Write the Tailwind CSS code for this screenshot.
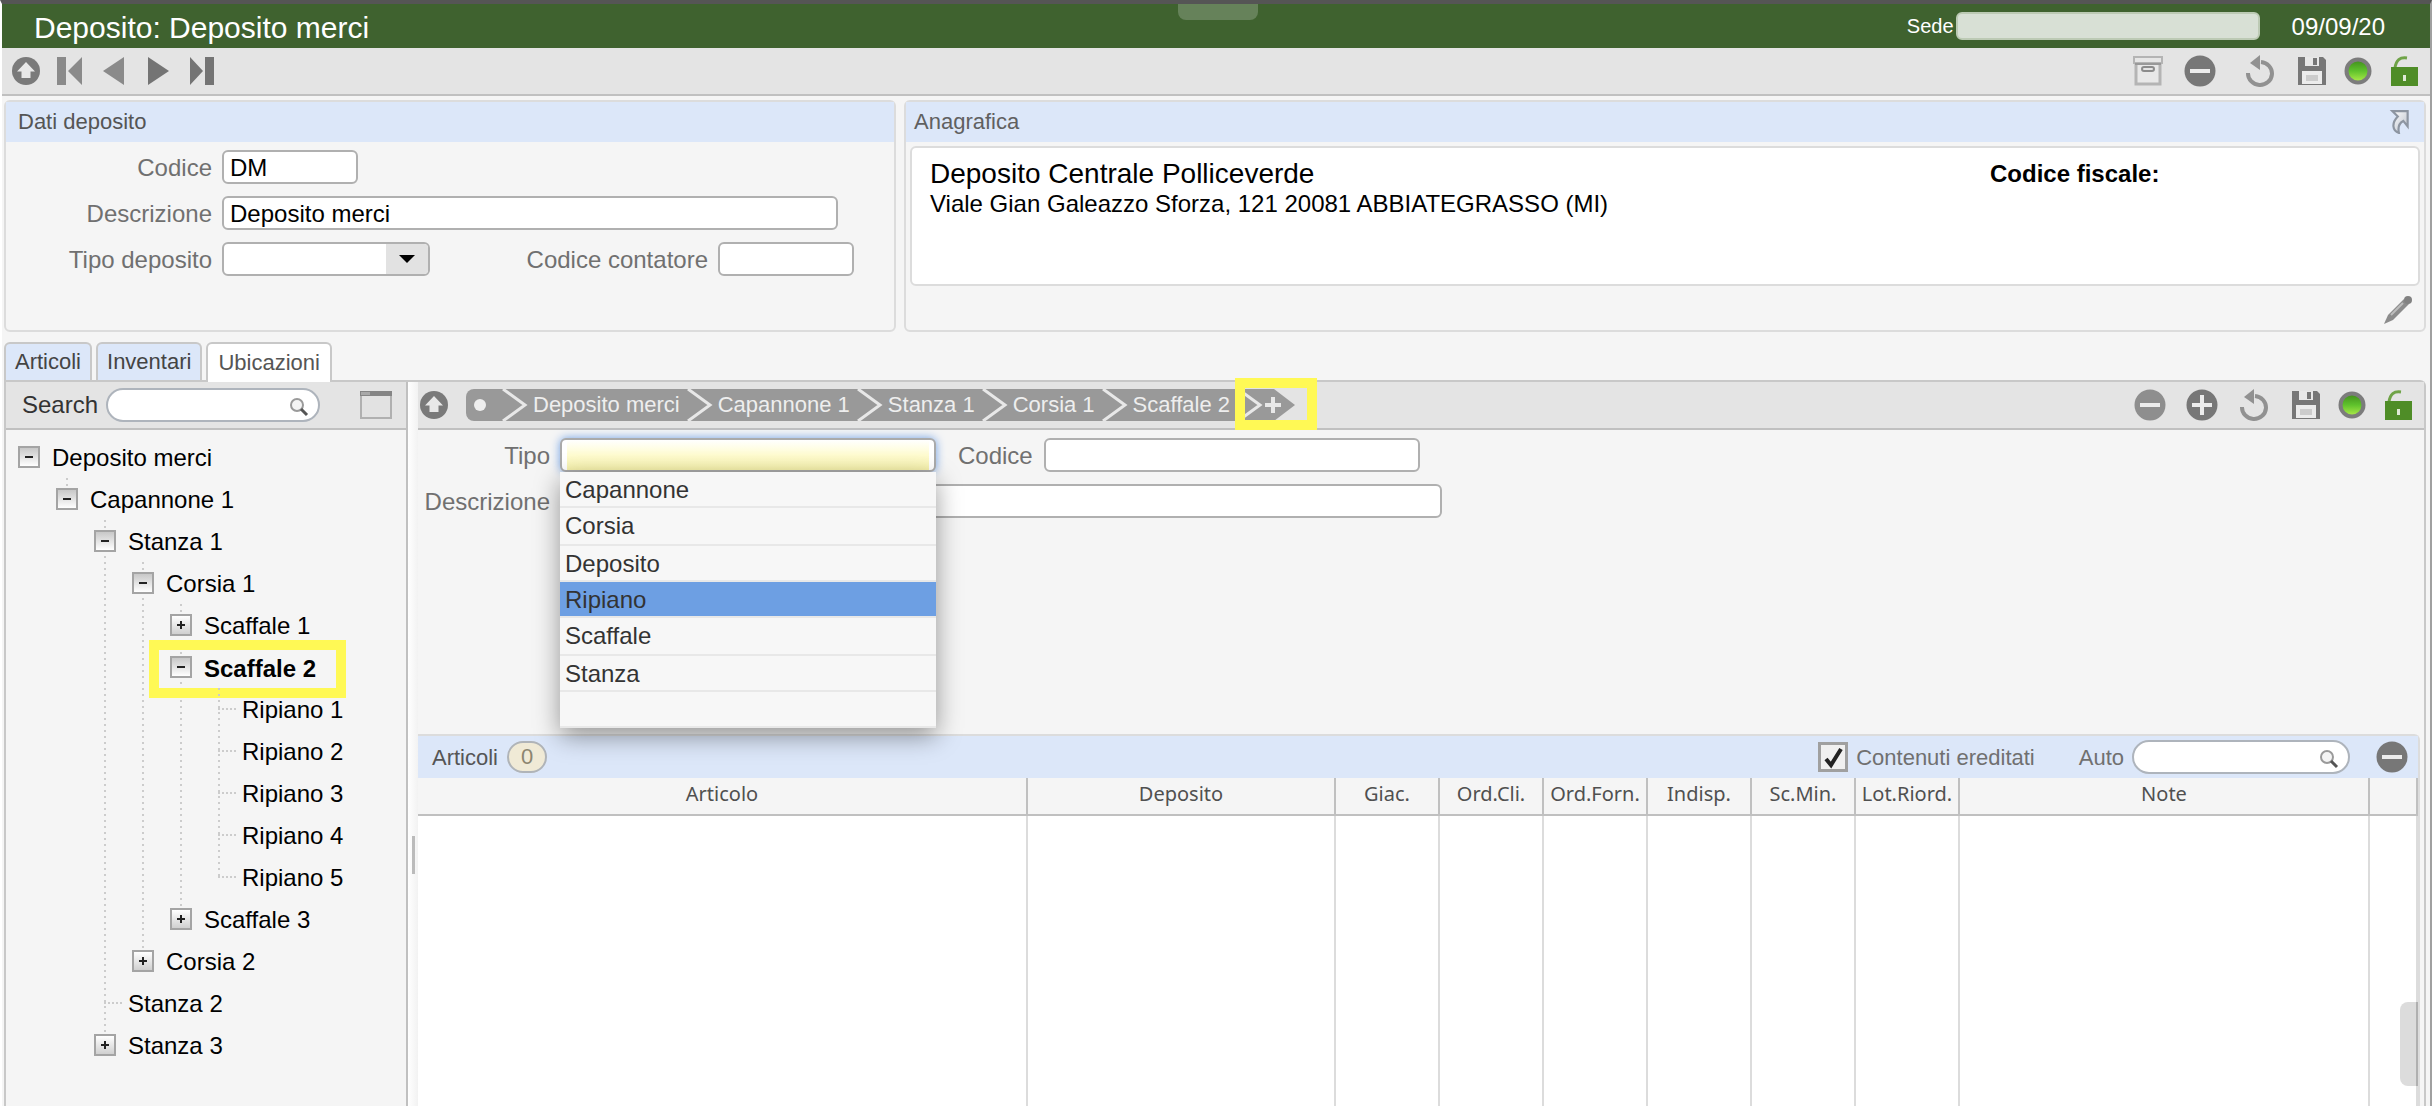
<!DOCTYPE html>
<html lang="it">
  <head>
    <meta charset="UTF-8" />
    <meta name="viewport" content="width=device-width, initial-scale=1.0" />
    <title>Deposito: Deposito merci</title>
    <script src="https://cdn.jsdelivr.net/npm/@tailwindcss/browser@4"></script>
  </head>
  <body class="bg-[#f5f5f5] text-black text-2xl leading-7 font-['Liberation_Sans',Arial,sans-serif]">
    <!-- icons -->
    <svg class="absolute size-0">
      <defs>
        <linearGradient id="led-fill" x1="0" y1="0" x2="0" y2="1">
          <stop offset="0" stop-color="#3f8a1c" />
          <stop offset="0.5" stop-color="#5fc22c" />
          <stop offset="1" stop-color="#b4ee4c" />
        </linearGradient>
        <linearGradient id="arrow-fill" x1="0" y1="0" x2="1" y2="1">
          <stop offset="0" stop-color="#ffffff" />
          <stop offset="1" stop-color="#b8bec8" />
        </linearGradient>
      </defs>
      <symbol id="up" viewBox="0 0 28 28">
        <circle cx="14" cy="14" r="14" fill="#7a7a7a" />
        <path d="M14 5l9 9.5h-4.500V21h-9v-6.500H5z" fill="#e8e8e8" />
      </symbol>
      <symbol id="first" viewBox="0 0 28 28"><path d="M1 0h9v28H1zM26 0v28L12 14z" fill="#8a8a8a" /></symbol>
      <symbol id="prev" viewBox="0 0 28 28"><path d="M24 0v28L3 14z" fill="#8a8a8a" /></symbol>
      <symbol id="next" viewBox="0 0 28 28"><path d="M4 0v28l21-14z" fill="#747474" /></symbol>
      <symbol id="last" viewBox="0 0 28 28"><path d="M2 0v28l13-14zM17 0h9v28h-9z" fill="#747474" /></symbol>
      <symbol id="archive" viewBox="0 0 32 32">
        <g fill="none" stroke="#b4b4b4" stroke-width="2">
          <path d="M2 2h28v6H2z" fill="#e6e6e6" />
          <path d="M4 9v20h24V9" stroke-width="3" fill="#e8e8e8" />
        </g>
        <path d="M3 9h26" stroke="#999" stroke-width="2" />
        <rect x="10" y="12" width="12" height="4" rx="2" fill="#e4e4e4" stroke="#8c8c8c" stroke-width="2" />
      </symbol>
      <symbol id="minus" viewBox="0 0 32 32">
        <circle cx="16" cy="16" r="15.500" fill="currentColor" />
        <path d="M6 14h20v4H6z" fill="#ececec" />
      </symbol>
      <symbol id="plus" viewBox="0 0 32 32">
        <circle cx="16" cy="16" r="15.500" fill="currentColor" />
        <path d="M6 14h8V6h4v8h8v4h-8v8h-4v-8H6z" fill="#ececec" />
      </symbol>
      <symbol id="undo" viewBox="0 0 32 32">
        <path d="M4 18a12 11.500 0 1 0 13-11" fill="none" stroke="#919191" stroke-width="4" />
        <path d="M6 8l10-8v15z" fill="#919191" />
      </symbol>
      <symbol id="save" viewBox="0 0 32 32">
        <path d="M2 2h25l3 3v25H2z" fill="#777" />
        <path d="M9 2h14v9H9z" fill="#e8e8e8" />
        <path d="M17 3h4v7h-4z" fill="#777" />
        <path d="M6 16h20v13H6z" fill="#ececec" />
        <path d="M10 20h12v6H10z" fill="#ccc" />
      </symbol>
      <symbol id="led" viewBox="0 0 32 32">
        <circle cx="16" cy="16" r="11.500" fill="url(#led-fill)" stroke="#7c7c7c" stroke-width="4" />
      </symbol>
      <symbol id="unlock" viewBox="0 0 32 32">
        <path d="M7 13C8 5 12 2 19 3" fill="none" stroke="#6fa347" stroke-width="3" />
        <path d="M3 12h27v19H3z" fill="#4f8d27" />
        <path d="M15 20h3v6h-3z" fill="#dfe9d5" />
      </symbol>
      <symbol id="search" viewBox="0 0 20 20">
        <circle cx="8" cy="8" r="6" fill="#f4f4f4" stroke="#9a9a9a" stroke-width="2" />
        <path d="M12 12l6 6" stroke="#555" stroke-width="3" />
      </symbol>
      <symbol id="chevron" viewBox="0 0 26 32">
        <path d="M1 0l22 16L1 32" fill="none" stroke="#e8e8e8" stroke-width="3" />
      </symbol>
    </svg>

    <div class="min-h-screen flex flex-col border-t-4 border-t-[#555] border-l-2 border-l-white border-r-2 border-r-[#a0a0a0]">
      <!-- title bar -->
      <header class="relative h-11 shrink-0 flex items-center bg-[#3f622f] text-white">
        <h1 class="pt-1 pl-8 text-[30px]">Deposito: Deposito merci</h1>
        <div class="absolute top-0 left-[1176px] w-20 h-4 rounded-b-lg bg-[#66825a]"></div>
        <label for="sede" class="ml-auto mr-[2px] text-xl">Sede</label>
        <input id="sede" type="text" class="w-[304px] h-7 rounded-md border-2 border-[#bccab4] bg-[#d8e0d5]" />
        <time class="pt-[2px] ml-8 mr-[45px]">09/09/20</time>
      </header>

      <div class="h-12 shrink-0 flex items-center justify-between bg-[#e4e4e4] border-b-2 border-[#c0c0c0] px-[10px]">
        <div class="flex gap-4">
          <button aria-label="Su"><svg class="size-7"><use href="#up" /></svg></button>
          <button aria-label="Primo"><svg class="size-7"><use href="#first" /></svg></button>
          <button aria-label="Precedente"><svg class="size-7"><use href="#prev" /></svg></button>
          <button aria-label="Successivo"><svg class="size-7"><use href="#next" /></svg></button>
          <button aria-label="Ultimo"><svg class="size-7"><use href="#last" /></svg></button>
        </div>
        <div class="flex text-[#777]">
          <button aria-label="Archivia" class="mr-5"><svg class="size-8"><use href="#archive" /></svg></button>
          <button aria-label="Elimina" class="mr-7"><svg class="size-8"><use href="#minus" /></svg></button>
          <button aria-label="Annulla" class="mr-5"><svg class="size-8"><use href="#undo" /></svg></button>
          <button aria-label="Salva" class="mr-[14px]"><svg class="size-8"><use href="#save" /></svg></button>
          <button aria-label="Stato" class="mr-[14px]"><svg class="size-8"><use href="#led" /></svg></button>
          <button aria-label="Sblocca"><svg class="size-8"><use href="#unlock" /></svg></button>
        </div>
      </div>

      <div class="flex gap-2 pt-1 pl-[2px] pr-1">
        <!-- dati deposito -->
        <section class="w-[892px] h-[232px] shrink-0 border-2 border-[#dcdcdc] rounded-md">
          <h2 class="h-10 flex items-center px-3 bg-[#dce7f9] text-[22px] text-[#555]">Dati deposito</h2>
          <form class="flex flex-col gap-3 pt-2 text-[#707070]">
            <div class="flex items-center gap-[10px]">
              <label for="codice" class="w-[206px] pt-[2px] text-right">Codice</label>
              <input id="codice" type="text" value="DM" class="w-[136px] h-[34px] pt-[2px] px-[6px] bg-white text-black border-2 border-[#b0b0b0] rounded-md" />
            </div>
            <div class="flex items-center gap-[10px]">
              <label for="descrizione" class="w-[206px] pt-[2px] text-right">Descrizione</label>
              <input id="descrizione" type="text" value="Deposito merci" class="w-[616px] h-[34px] pt-[2px] px-[6px] bg-white text-black border-2 border-[#b0b0b0] rounded-md" />
            </div>
            <div class="flex items-center gap-[10px]">
              <label for="tipo-deposito" class="w-[206px] pt-[2px] text-right">Tipo deposito</label>
              <div class="relative">
                <select id="tipo-deposito" class="block w-[208px] h-[34px] appearance-none bg-white border-2 border-[#b0b0b0] rounded-md">
                  <option></option>
                </select>
                <span class="absolute right-[2px] top-[2px] w-[42px] h-[30px] flex items-center justify-center bg-[#e2e2e2] rounded-r-sm pointer-events-none">
                  <svg class="w-4 h-2" viewBox="0 0 16 8"><path d="M0 0h16L8 8z" /></svg>
                </span>
              </div>
              <label for="contatore" class="w-[268px] pt-[2px] text-right">Codice contatore</label>
              <input id="contatore" type="text" class="w-[136px] h-[34px] px-[6px] bg-white text-black border-2 border-[#b0b0b0] rounded-md" />
            </div>
          </form>
        </section>

        <!-- anagrafica -->
        <section class="flex-1 h-[232px] flex flex-col border-2 border-[#dcdcdc] rounded-md">
          <div class="h-10 shrink-0 flex items-center justify-between pl-2 pr-3 bg-[#dce7f9]">
            <h2 class="text-[22px] text-[#606060]">Anagrafica</h2>
            <button aria-label="Apri anagrafica">
              <svg class="size-6" viewBox="0 0 20 22"><path d="M3 1h14v14l-4-5c-4 2-5 6-4 11C3 19 2 12 8 6z" fill="url(#arrow-fill)" stroke="#8d95a1" stroke-width="2" /></svg>
            </button>
          </div>
          <div class="h-[140px] flex mt-1 mx-1 pt-[10px] pl-[18px] bg-white border-2 border-[#dcdcdc] rounded-md">
            <div class="flex-1">
              <p class="text-[28px] leading-8">Deposito Centrale Polliceverde</p>
              <p>Viale Gian Galeazzo Sforza, 121 20081 ABBIATEGRASSO (MI)</p>
            </div>
            <p class="w-[428px] leading-8 font-bold">Codice fiscale:</p>
          </div>
          <button aria-label="Modifica" class="ml-auto mr-3 mt-[10px]">
            <svg class="size-7" viewBox="0 0 28 28">
              <path d="M0 28l4-9L20 3l5 5L9 24z" fill="#8c8c8c" />
              <path d="M7 19L19 7" stroke="#bdbdbd" stroke-width="2" />
              <circle cx="24" cy="4" r="4" fill="#828282" />
            </svg>
          </button>
        </section>
      </div>

      <!-- tabs -->
      <nav class="relative z-10 flex gap-1 pt-[10px] pl-[2px] text-[22px] text-[#444]">
        <button class="h-[38px] px-[9px] bg-[#dce7f9] border-2 border-b-0 border-[#c8c8c8] rounded-t-md">Articoli</button>
        <button class="h-[38px] px-[9px] bg-[#dce7f9] border-2 border-b-0 border-[#c8c8c8] rounded-t-md">Inventari</button>
        <button class="h-10 -mb-[2px] px-[10px] bg-white border-2 border-b-0 border-[#c8c8c8] rounded-t-md text-[#555]">Ubicazioni</button>
      </nav>

      <main class="flex-1 flex ml-[2px] mr-1 border-2 border-b-0 border-[#c8c8c8] rounded-tr-md">
        <!-- albero ubicazioni -->
        <aside class="w-[402px] shrink-0 border-r-2 border-[#c0c0c0]">
          <div class="h-12 flex items-center pl-4 pr-[14px] bg-[#e4e4e4] border-b-2 border-[#c0c0c0]">
            <label for="cerca" class="text-[#333]">Search</label>
            <div class="relative ml-2">
              <input id="cerca" type="text" class="block w-[214px] h-[34px] pl-4 pr-10 bg-white border-2 border-[#aeb4bc] rounded-full" />
              <svg class="absolute right-[11px] top-[9px] size-5"><use href="#search" /></svg>
            </div>
            <button aria-label="Finestra" class="ml-auto">
              <svg class="w-8 h-7" viewBox="0 0 32 28">
                <path d="M1 1h30v26H1z" fill="#e2e2e2" stroke="#b0b0b0" stroke-width="2" />
                <path d="M0 0h32v5H0z" fill="#858585" />
                <path d="M1 1h9v3H1z" fill="#a8a8a8" />
              </svg>
            </button>
          </div>
          <div id="tree" class="pt-[6px] pl-1"></div>
        </aside>

        <div class="w-[10px] shrink-0 bg-linear-to-r from-white to-[#f2f2f2]">
          <span class="block ml-1 mt-[454px] w-[3px] h-[38px] bg-[#bbb]"></span>
        </div>

        <div class="flex-1 flex flex-col">
          <div class="h-12 shrink-0 flex items-center justify-between pl-[2px] pr-[10px] bg-[#e4e4e4] border-b-2 border-[#c0c0c0]">
            <div class="flex items-center">
              <button aria-label="Su" class="mr-[18px]"><svg class="size-7"><use href="#up" /></svg></button>
              <nav class="relative h-8 flex items-center text-[22px] text-[#eee]">
                <a href="#" aria-label="Radice" class="h-8 w-9 flex items-center pl-2 bg-[#999] rounded-l-lg"><span class="size-3 rounded-full bg-[#eee]"></span></a>
                <svg class="w-[26px] h-8 bg-[#999]"><use href="#chevron" /></svg>
                <a href="#" class="h-8 pl-[5px] pr-[7px] bg-[#999] leading-8">Deposito merci</a>
                <svg class="w-[26px] h-8 bg-[#999]"><use href="#chevron" /></svg>
                <a href="#" class="h-8 pl-[5px] pr-[7px] bg-[#999] leading-8">Capannone 1</a>
                <svg class="w-[26px] h-8 bg-[#999]"><use href="#chevron" /></svg>
                <a href="#" class="h-8 pl-[5px] pr-[7px] bg-[#999] leading-8">Stanza 1</a>
                <svg class="w-[26px] h-8 bg-[#999]"><use href="#chevron" /></svg>
                <a href="#" class="h-8 pl-[5px] pr-[7px] bg-[#999] leading-8">Corsia 1</a>
                <svg class="w-[26px] h-8 bg-[#999]"><use href="#chevron" /></svg>
                <a href="#" class="h-8 pl-[5px] pr-[7px] bg-[#999] leading-8">Scaffale 2</a>
                <svg class="w-[26px] h-8 bg-[#999]"><use href="#chevron" /></svg>
                <button aria-label="Aggiungi">
                  <svg class="w-8 h-8" viewBox="0 0 32 32">
                    <path d="M0 0h11l21 16-21 16H0z" fill="#999" />
                    <path d="M2 14h6V8h4v6h6v4h-6v6H8v-6H2z" fill="#e8e8e8" />
                  </svg>
                </button>
                <span class="absolute -right-[22px] -top-[11px] w-[82px] h-[52px] border-10 border-[#fff955]"></span>
              </nav>
            </div>
            <div class="flex text-[#777]">
              <button aria-label="Elimina" class="mr-5 text-[#8e8e8e]"><svg class="size-8"><use href="#minus" /></svg></button>
              <button aria-label="Aggiungi" class="mr-5"><svg class="size-8"><use href="#plus" /></svg></button>
              <button aria-label="Annulla" class="mr-5"><svg class="size-8"><use href="#undo" /></svg></button>
              <button aria-label="Salva" class="mr-[14px]"><svg class="size-8"><use href="#save" /></svg></button>
              <button aria-label="Stato" class="mr-[14px]"><svg class="size-8"><use href="#led" /></svg></button>
              <button aria-label="Sblocca"><svg class="size-8"><use href="#unlock" /></svg></button>
            </div>
          </div>

          <form class="h-[304px] shrink-0 flex flex-col gap-3 pt-2 text-[#707070]">
            <div class="flex items-center">
              <label for="tipo" class="w-[132px] mr-[10px] pt-[2px] text-right">Tipo</label>
              <div class="relative z-20">
                <div class="w-[376px] h-[34px] px-[5px] bg-white border-2 border-[#aaa] rounded-md shadow-[0_0_10px_#6f9fe4]">
                  <input id="tipo" type="text" class="block w-full h-[30px] bg-linear-to-b from-white via-[#fffcd0] to-[#f8f3ac] outline-none" />
                </div>
                <ul class="absolute left-0 top-[34px] w-[376px] bg-[#f7f7f7] text-[#333] shadow-[0_8px_24px_rgba(0,0,0,0.4)]">
                  <li class="h-9 px-[5px] leading-9 border-b-2 border-[#e8e8e8]">Capannone</li>
                  <li class="h-[38px] px-[5px] leading-9 border-b-2 border-[#e8e8e8]">Corsia</li>
                  <li class="h-9 px-[5px] leading-9 border-b-2 border-[#e8e8e8]">Deposito</li>
                  <li class="h-9 px-[5px] leading-9 border-b-2 border-[#e8e8e8] bg-[#6d9fe3]">Ripiano</li>
                  <li class="h-[38px] px-[5px] leading-9 border-b-2 border-[#e8e8e8]">Scaffale</li>
                  <li class="h-9 px-[5px] leading-9 border-b-2 border-[#e8e8e8]">Stanza</li>
                  <li class="h-9 border-b-2 border-[#e8e8e8]"></li>
                </ul>
              </div>
              <label for="codice-ubi" class="ml-[22px] mr-[11px] pt-[2px]">Codice</label>
              <input id="codice-ubi" type="text" class="w-[376px] h-[34px] px-[6px] bg-white border-2 border-[#b0b0b0] rounded-md" />
            </div>
            <div class="flex items-center">
              <label for="descr-ubi" class="w-[132px] mr-[10px] pt-[2px] text-right">Descrizione</label>
              <input id="descr-ubi" type="text" class="w-[882px] h-[34px] px-[6px] bg-white border-2 border-[#b0b0b0] rounded-md" />
            </div>
          </form>

          <!-- articoli -->
          <section class="relative flex-1 flex flex-col mr-1 bg-white border-t-2 border-r-2 border-[#dcdcdc] rounded-tr-md">
            <div class="h-[42px] shrink-0 flex items-center pl-[14px] pr-[10px] bg-[#dce7f9] text-[22px] text-[#707070]">
              <h2 class="pt-[2px] text-[#555]">Articoli</h2>
              <span class="ml-[9px] w-10 h-8 flex items-center justify-center bg-[#f0ead6] border-2 border-[#b0b4b8] rounded-full text-[#8c8570]">0</span>
              <input id="ereditati" type="checkbox" checked class="ml-auto size-[30px] appearance-none bg-[#f0f0f0] border-3 border-[#a0a0a0]" />
              <svg class="size-[30px] -ml-[30px] pointer-events-none" viewBox="0 0 30 30"><path d="M8 17l5 6L23 7" fill="none" stroke="#222" stroke-width="4" /></svg>
              <label for="ereditati" class="ml-2 pt-[2px]">Contenuti ereditati</label>
              <label for="auto" class="ml-11 mr-2 pt-[2px]">Auto</label>
              <div class="relative">
                <input id="auto" type="text" class="block w-[218px] h-[34px] pl-4 pr-10 bg-white border-2 border-[#aeb4bc] rounded-full" />
                <svg class="absolute right-[11px] top-[9px] size-5"><use href="#search" /></svg>
              </div>
              <button aria-label="Elimina" class="ml-[26px] text-[#777]"><svg class="size-8"><use href="#minus" /></svg></button>
            </div>
            <table class="flex-1 w-full flex flex-col text-xl text-[#505050] font-['Noto_Sans',sans-serif]">
              <thead>
                <tr class="h-[38px] grid grid-cols-[610px_308px_repeat(6,104px)_1fr_48px] bg-[#f5f5f5] border-b-2 border-[#c0c0c0] leading-8 *:font-normal *:border-r-2 *:border-[#c0c0c0]">
                  <th>Articolo</th>
                  <th>Deposito</th>
                  <th>Giac.</th>
                  <th>Ord.Cli.</th>
                  <th>Ord.Forn.</th>
                  <th>Indisp.</th>
                  <th>Sc.Min.</th>
                  <th>Lot.Riord.</th>
                  <th>Note</th>
                  <th></th>
                </tr>
              </thead>
              <tbody class="flex-1 flex">
                <tr class="flex-1 grid grid-cols-[610px_308px_repeat(6,104px)_1fr_48px] *:border-r-2 *:border-[#dcdcdc]">
                  <td></td>
                  <td></td>
                  <td></td>
                  <td></td>
                  <td></td>
                  <td></td>
                  <td></td>
                  <td></td>
                  <td></td>
                  <td></td>
                </tr>
              </tbody>
            </table>
            <div class="absolute right-0 bottom-5 w-[18px] h-[84px] bg-[#dcdcdc] border-r-2 border-[#b0b0b0] rounded-l-lg"></div>
          </section>
        </div>
      </main>
    </div>

    <script>
      const locations = [
        { name: "Deposito merci", children: [
          { name: "Capannone 1", children: [
            { name: "Stanza 1", children: [
              { name: "Corsia 1", children: [
                { name: "Scaffale 1", closed: true },
                { name: "Scaffale 2", selected: true, children: [
                  { name: "Ripiano 1" },
                  { name: "Ripiano 2" },
                  { name: "Ripiano 3" },
                  { name: "Ripiano 4" },
                  { name: "Ripiano 5" },
                ] },
                { name: "Scaffale 3", closed: true },
              ] },
              { name: "Corsia 2", closed: true },
            ] },
            { name: "Stanza 2" },
            { name: "Stanza 3", closed: true },
          ] },
        ] },
      ];

      const dots = "w-[2px] bg-[repeating-linear-gradient(to_bottom,#ccc_0_2px,transparent_2px_6px)]";

      // guides: one boolean per ancestor, true if its line goes on below
      function renderNodes(nodes, guides) {
        return nodes.map((node, i) => {
          const isLast = i === nodes.length - 1;
          const isLeaf = !node.children && !node.closed;
          const cells = guides.map((on) =>
            `<span class="w-[38px] h-full flex justify-center">${on ? `<span class="h-full ${dots}"></span>` : ""}</span>`
          ).join("");
          const top = guides.length ? `<span class="absolute top-0 left-[18px] h-[21px] ${dots}"></span>` : "";
          const bottom = isLast ? "" : `<span class="absolute top-[24px] bottom-0 left-[18px] ${dots}"></span>`;
          const toggle = isLeaf
            ? `<span class="absolute left-[18px] top-[20px] w-[18px] h-[2px] bg-[repeating-linear-gradient(to_right,#ccc_0_2px,transparent_2px_4px)]"></span>`
            : `<button aria-label="${node.closed ? "Apri" : "Chiudi"}" class="absolute left-2 top-[10px] size-[22px] border-2 border-[#a4a4a4] bg-linear-to-b ${node.closed ? "from-white to-[#d0d0d0]" : "from-[#c8c8c8] to-white"}">
                <svg class="size-[18px]" viewBox="0 0 18 18"><path d="${node.closed ? "M5 9h8M9 5v8" : "M5 9h8"}" stroke="#222" stroke-width="2" /></svg>
              </button>`;
          const frame = node.selected
            ? `<span class="absolute -left-[13px] -top-[6px] -right-[30px] -bottom-[10px] border-10 border-[#fff955]"></span>`
            : "";
          const row = `<div class="h-[42px] flex">${cells}
              <div class="relative flex items-center">
                <span class="relative w-[38px] h-full">${top}${bottom}${toggle}</span>
                <span class="pl-1 ${node.selected ? "pt-1 font-bold" : "pt-[2px]"}">${node.name}</span>${frame}
              </div>
            </div>`;
          const below = node.children ? renderNodes(node.children, [...guides, !isLast]) : "";
          return row + below;
        }).join("");
      }

      document.getElementById("tree").innerHTML = renderNodes(locations, []);
    </script>
  </body>
</html>
